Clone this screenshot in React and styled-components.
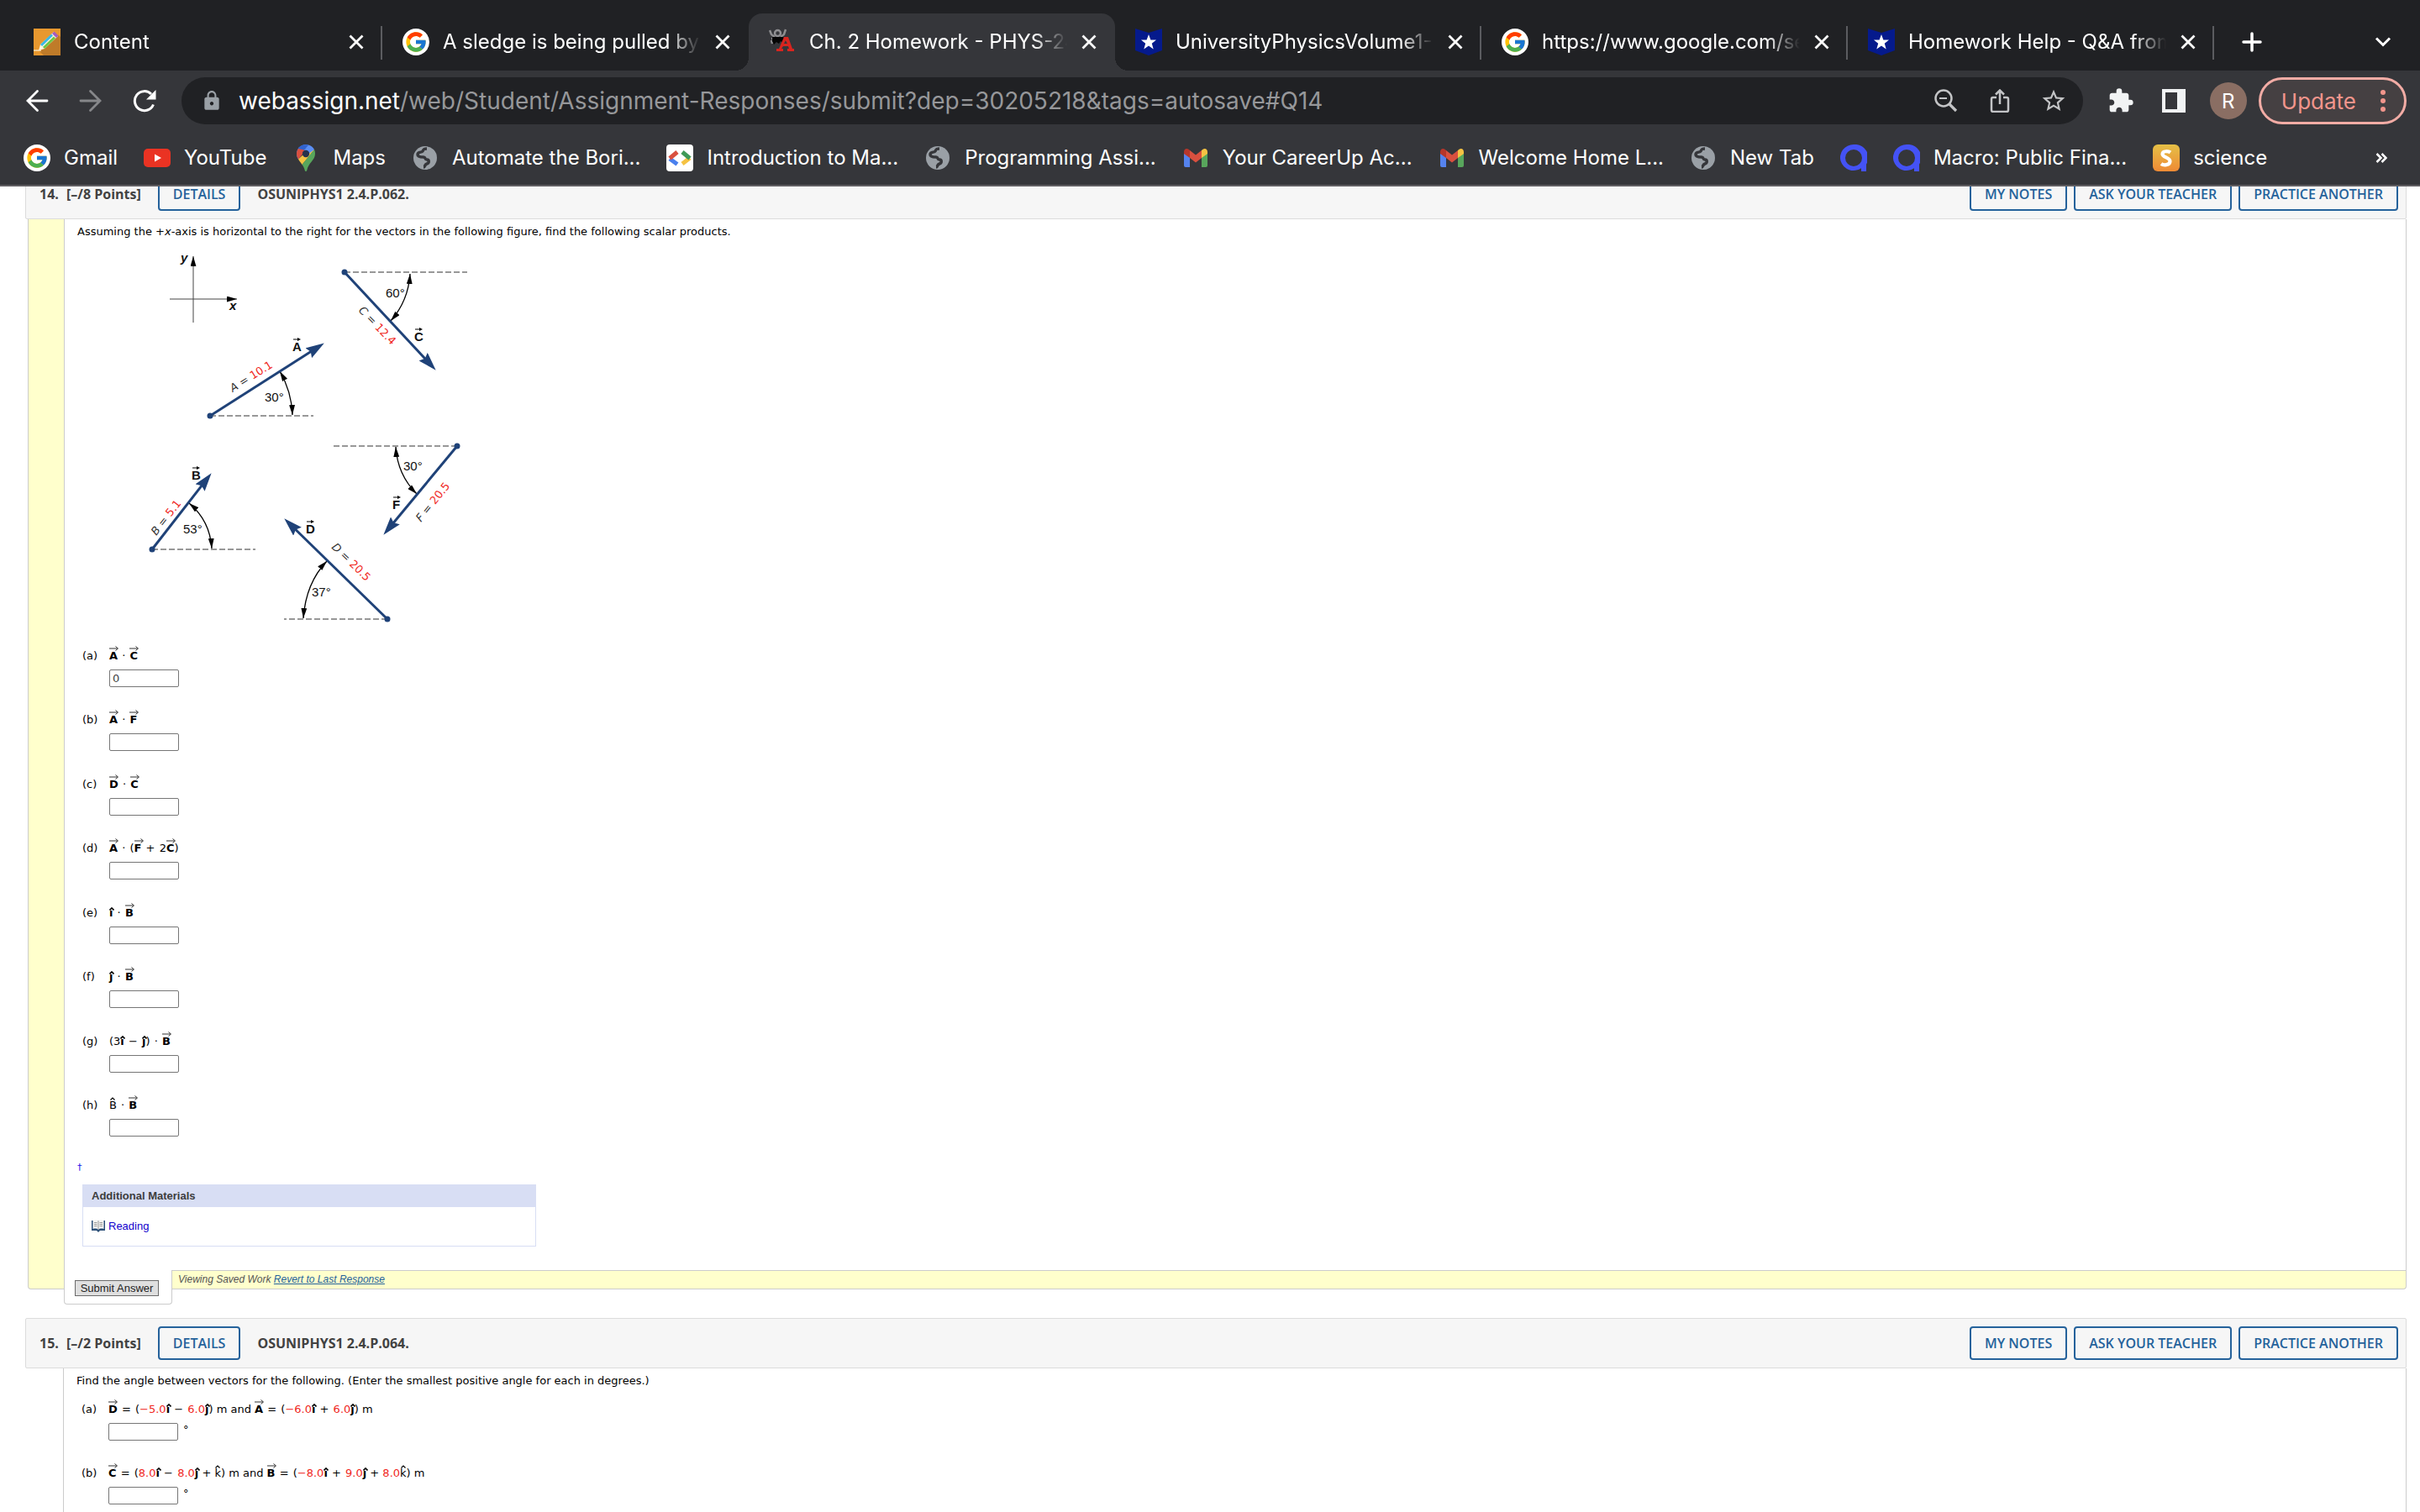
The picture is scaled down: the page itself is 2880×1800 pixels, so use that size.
import React from 'react'
import styled, { createGlobalStyle, css } from 'styled-components'
import { FcGoogle } from 'react-icons/fc'
import { MdExtension, MdStarBorder, MdLock } from 'react-icons/md'

const GlobalStyle = createGlobalStyle`
    * {
        box-sizing: border-box;
    }
    body {
        margin: 0;
        background-color: white;
    }
    button, input {
        font: inherit;
        margin: 0;
    }
    svg {
        display: block;
    }
`

/* ---------- browser ---------- */

const Window = styled.div`
    height: 100vh;
    display: flex;
    flex-direction: column;
    overflow: hidden;
`
const Chrome = styled.header`
    flex: none;
    font-family: Inter, "Liberation Sans", sans-serif;
    color: white;
    background-color: #35363a;
    border-bottom: 2px solid #605e62;
`
const TabStrip = styled.nav`
    height: 84px;
    display: flex;
    align-items: stretch;
    padding: 16px 28px 0 16px;
    background-color: #202124;
`
const Tab = styled.div`
    flex: 0 1 436px;
    min-width: 0;
    display: flex;
    align-items: center;
    gap: 16px;
    padding: 0 21px 0 24px;
    position: relative;
    &:first-child {
        flex-basis: 439px;
    }
    ${(props) => props.$divider && css`
        &::after {
            content: "";
            position: absolute;
            right: 0;
            top: 15px;
            width: 2px;
            height: 40px;
            background-color: #5b5c60;
        }
    `}
    ${(props) => props.$active && css`
        background-color: #35363a;
        border-radius: 16px 16px 0 0;
        &::before, &::after {
            content: "";
            position: absolute;
            bottom: 0;
            width: 16px;
            height: 16px;
        }
        &::before {
            left: -16px;
            background: radial-gradient(circle at 0 0, transparent 16px, #35363a 16px);
        }
        &::after {
            right: -16px;
            background: radial-gradient(circle at 100% 0, transparent 16px, #35363a 16px);
        }
    `}
`
const TabTitle = styled.span`
    flex: 1;
    min-width: 0;
    font-size: 24px;
    line-height: 32px;
    white-space: nowrap;
    overflow: hidden;
    mask-image: linear-gradient(to right, black calc(100% - 40px), transparent);
`
const IconButton = styled.button`
    flex: none;
    display: flex;
    align-items: center;
    justify-content: center;
    width: ${(props) => props.$size}px;
    height: ${(props) => props.$size}px;
    padding: 0;
    border: none;
    color: ${(props) => props.$color || "white"};
    background-color: transparent;
    cursor: pointer;
`
const NewTab = styled.div`
    flex: 1;
    display: flex;
    align-items: center;
    justify-content: space-between;
    padding-left: 29px;
`
const Toolbar = styled.div`
    height: 72px;
    display: flex;
    align-items: center;
    padding: 0 16px 0 28px;
`
const NavButtons = styled.div`
    display: flex;
    gap: 32px;
    margin-right: 28px;
`
const AddressBar = styled.div`
    flex: 1;
    min-width: 0;
    height: 56px;
    display: flex;
    align-items: center;
    gap: 19px;
    padding: 0 19px 0 23px;
    border-radius: 28px;
    background-color: #202124;
`
const Address = styled.div`
    flex: 1;
    min-width: 0;
    font-size: 28px;
    line-height: 36px;
    white-space: nowrap;
    overflow: hidden;
    outline: none;
    color: #96979a;
`
const Host = styled.span`
    color: white;
`
const AddressActions = styled.div`
    display: flex;
    gap: 32px;
    color: #c3c4c6;
`
const Extensions = styled.div`
    display: flex;
    align-items: center;
    gap: 31px;
    margin: 0 14px 0 29px;
`
const Avatar = styled.button`
    width: 44px;
    height: 44px;
    margin-left: -4px;
    padding: 0;
    border: none;
    border-radius: 50%;
    font-size: 24px;
    color: white;
    background-color: #8a6e63;
`
const UpdateButton = styled.button`
    height: 56px;
    display: flex;
    align-items: center;
    gap: 29px;
    padding: 0 22px 0 24px;
    border: 3px solid #f2aca5;
    border-radius: 28px;
    font-size: 26px;
    color: #f2958c;
    background-color: #454042;
`
const Bookmarks = styled.nav`
    height: 64px;
    display: flex;
    align-items: center;
    gap: 31px;
    padding: 0 34px 0 28px;
`
const Bookmark = styled.a`
    display: flex;
    align-items: center;
    gap: 16px;
    font-size: 24px;
    line-height: 32px;
    white-space: nowrap;
    color: white;
    text-decoration: none;
`
const More = styled.div`
    margin-left: auto;
`

/* ---------- assignment ---------- */

const Page = styled.main`
    flex: 1;
    min-height: 0;
    overflow: hidden;
    padding: 0 16px 0 30px;
    background-color: white;
`
const Scrolled = styled.div`
    margin-top: -21px;
`
const Question = styled.section`
    margin-bottom: 34px;
    font-family: Verdana, "DejaVu Sans", sans-serif;
    font-size: 13px;
    line-height: 20px;
    color: black;
`
const QuestionHeader = styled.div`
    height: 60px;
    display: flex;
    align-items: center;
    padding: 0 9px 0 16px;
    border: 1px solid #dcdcdc;
    border-radius: 2px;
    background-color: #f6f6f6;
    font-family: "Open Sans", sans-serif;
    font-size: 16px;
    font-weight: 700;
    color: #424242;
`
const Number = styled.span`
    width: 32px;
`
const Points = styled.span`
    margin-right: 20px;
`
const ProblemName = styled.span`
    margin-left: 20px;
`
const HeaderActions = styled.div`
    display: flex;
    gap: 8px;
    margin-left: auto;
`
const HeaderButton = styled.button`
    height: 40px;
    padding: 0 16px;
    border: 2px solid #25629b;
    border-radius: 4px;
    font-weight: 600;
    color: #25629b;
    background-color: transparent;
    cursor: pointer;
`
const SavedPanel = styled.div`
    margin-left: 3px;
    padding-left: 42px;
    border: 1px solid #ccc;
    border-top: none;
    border-radius: 0 0 4px 4px;
    background-color: #ffffcc;
`
const PlainPanel = styled.div`
    margin-left: 45px;
    border: 1px solid #ccc;
    border-top: none;
`
const QuestionBody = styled.div`
    padding: 5px 15px 28px;
    border-left: ${(props) => props.$compact ? "none" : "1px solid #ccc"};
    background-color: white;
`
const Prompt = styled.p`
    margin: 0;
`
const Figure = styled.svg`
    margin: 10px 0 20px 73px;
`
const Parts = styled.div`
    margin-top: ${(props) => props.$top || 0}px;
    padding-left: 6px;
`
const Part = styled.div`
    height: 76px;
    display: grid;
    grid-template-columns: 32px 1fr;
    grid-template-rows: 20px 21px;
    row-gap: 6px;
    white-space: nowrap;
    &:nth-child(even) {
        height: 77px;
    }
`
const Answer = styled.div`
    grid-column: 2;
    display: flex;
    gap: 6px;
    line-height: 16px;
`
const AnswerInput = styled.input`
    width: 83px;
    height: 21px;
    padding: 0 3px;
    border: 1px solid #767676;
    border-radius: 2px;
    color: #444;
    background-color: white;
`
const Accented = styled.span`
    display: inline-block;
    position: relative;
    font-weight: ${(props) => props.$light ? 400 : 700};
    svg {
        position: absolute;
        top: ${(props) => props.$top}px;
        left: 0;
    }
`
const Op = styled.span`
    margin: 0 1px;
`
const Random = styled.span`
    color: #f0281e;
`
const Note = styled.a`
    display: block;
    height: 16px;
    margin-bottom: 11px;
    font-size: 11px;
    line-height: 14px;
    color: #1a0ee8;
    text-decoration: none;
`
const Materials = styled.div`
    max-width: 540px;
    margin-left: 6px;
    border: 1px solid #d8def4;
    font-family: Arial, "Liberation Sans", sans-serif;
    font-size: 13px;
`
const MaterialsTitle = styled.div`
    height: 26px;
    padding: 3px 10px;
    font-weight: 700;
    color: #3c3c3c;
    background-color: #d8def4;
`
const MaterialsLink = styled.a`
    height: 46px;
    display: flex;
    align-items: center;
    gap: 4px;
    padding: 0 10px;
    color: #1200cc;
    text-decoration: none;
`
const SubmitRow = styled.div`
    display: flex;
    align-items: flex-start;
    font-family: Arial, "Liberation Sans", sans-serif;
    margin-bottom: -19px;
`
const SubmitBox = styled.div`
    width: 129px;
    height: 41px;
    padding: 12px 0 0 12px;
    border: 1px solid #ccc;
    border-top: none;
    border-radius: 0 0 4px 4px;
    background-color: white;
`
const SubmitButton = styled.button`
    display: block;
    height: 19px;
    width: 100px;
    padding: 0;
    border: 1px solid #6b6b6b;
    font-size: 13px;
    line-height: 15px;
    color: #222;
    background-color: #dfdfdf;
`
const SavedNote = styled.div`
    flex: 1;
    height: 21px;
    padding-left: 7px;
    border-top: 1px solid #ccc;
    font-size: 12px;
    font-style: italic;
    color: #555;
    a {
        color: #25629b;
    }
`

/* ---------- icons ---------- */

const Cross = () => (
    <svg width="18" height="18" viewBox="0 0 18 18" fill="none" stroke="currentColor" strokeWidth="2.8">
        <path d="M1.5 1.5 16.5 16.5M16.5 1.5 1.5 16.5" />
    </svg>
)
const GoogleIcon = () => (
    <svg width="32" height="32" viewBox="0 0 32 32">
        <circle cx="16" cy="16" r="16" fill="white" />
        <FcGoogle x="2" y="2" size={28} />
    </svg>
)
const PencilIcon = () => (
    <svg width="32" height="32" viewBox="0 0 32 32">
        <path d="M0 0h32v32H0z" fill="#e8982f" />
        <path d="M30 8l2 2v22H12l-5-5z" fill="#bf7b29" />
        <path d="M0 26h9" stroke="#f7cf94" strokeWidth="2" />
        <path d="M6 26l2-7L24 4l5 5-16 15z" fill="#fdf3dc" />
        <path d="M9 20 22 7.500" stroke="#38b8e8" strokeWidth="3" />
        <path d="M12 23 25 10.500" stroke="#6cc644" strokeWidth="3" />
        <path d="M22 6l2.500-2.500 5 5L27 11z" fill="#a45cc0" />
    </svg>
)
const AssignIcon = () => (
    <svg width="32" height="32" viewBox="0 0 32 32">
        <path d="M1 2l2 5 4 3M20 1l-2 6-4 3M3 12h14M3 14l1 4M18 11l3 3" stroke="#8d8d8f" strokeWidth="2.500" fill="none" />
        <circle cx="10.500" cy="5.500" r="3.500" fill="none" stroke="#8f8f92" strokeWidth="2.500" />
        <path d="M4 10h13l3 4-3 3-3-2-2 3-3-2-3 3-2-4z" fill="#050505" />
        <path d="M18 10h5l5 14h2v3h-8v-3h2l-1-3h-6l-2 3h2v3h-8v-3h3zM20 14l-2 4h4z" fill="#d8251f" fillRule="evenodd" />
    </svg>
)
const StarBadge = () => (
    <svg width="32" height="32" viewBox="0 0 32 32">
        <path d="M0 0l16 5L32 0v26l-16 6-16-6z" fill="#051a8c" />
        <path d="M16 7l2.400 6.400 6.600.2-5.200 4.200 1.900 6.600L16 20.600l-5.700 3.800 1.900-6.600L7 13.600l6.600-.2z" fill="white" />
    </svg>
)
const BackIcon = () => (
    <svg width="28" height="28" viewBox="0 0 28 28" fill="none" stroke="currentColor" strokeWidth="2.800" strokeLinecap="round">
        <path d="M26 14H3M14.500 2.500 3 14l11.500 11.500" />
    </svg>
)
const ForwardIcon = () => (
    <svg width="28" height="28" viewBox="0 0 28 28" fill="none" stroke="currentColor" strokeWidth="2.800" strokeLinecap="round">
        <path d="M2 14h23M13.500 2.500 25 14 13.500 25.500" />
    </svg>
)
const ReloadIcon = () => (
    <svg width="28" height="28" viewBox="0 0 28 28">
        <path d="M24.500 18.500A11.500 11.500 0 1 1 22 6" fill="none" stroke="currentColor" strokeWidth="3" />
        <path d="M27.500 1v11.500H16z" fill="currentColor" />
    </svg>
)
const ZoomOutIcon = () => (
    <svg width="28" height="28" viewBox="0 0 28 28" fill="none" stroke="currentColor" strokeWidth="2.500">
        <circle cx="11" cy="11" r="9.500" />
        <path d="M6 11h9" strokeWidth="2" />
        <path d="M18 18l8 8" strokeWidth="3.200" />
    </svg>
)
const ShareIcon = () => (
    <svg width="28" height="28" viewBox="0 0 28 28" fill="none" stroke="currentColor" strokeWidth="2.500">
        <path d="M10 10H6a2 2 0 0 0-2 2v13a2 2 0 0 0 2 2h16a2 2 0 0 0 2-2V12a2 2 0 0 0-2-2h-4M14 18V2M9 6.500 14 1.500l5 5" />
    </svg>
)
const SidePanelIcon = () => (
    <svg width="28" height="28" viewBox="0 0 28 28">
        <path d="M0 0h28v28H0zM4 4v20h14V4z" fill="currentColor" fillRule="evenodd" />
    </svg>
)
const DotsIcon = () => (
    <svg width="6" height="28" viewBox="0 0 6 28" fill="currentColor">
        <circle cx="3" cy="4" r="3" />
        <circle cx="3" cy="14" r="3" />
        <circle cx="3" cy="24" r="3" />
    </svg>
)
const YouTubeIcon = () => (
    <svg width="32" height="32" viewBox="0 0 32 32">
        <rect y="5" width="32" height="22" rx="5" fill="#ea3323" />
        <path d="M13 11.500v9l8-4.500z" fill="white" />
    </svg>
)
const MapsIcon = () => (
    <svg width="32" height="32" viewBox="0 0 32 32">
        <path d="M16 0C9.500 0 5 5 5 11c0 2.500.7 4.500 2 6.500L19 .5C18 .2 17 0 16 0z" fill="#4a80ee" />
        <path d="M12 .800c-2.200.8-4 2.200-5.200 4.200l5.200 4.500L19 .5C17 0 14 0 12 .8z" fill="#3163cf" />
        <path d="M7 5C5.500 7 5 9 5 11c0 2.500.8 4.700 2 6.500L16 7z" fill="#d9503f" />
        <path d="M7 17.500C8.400 19.800 10 21.500 11.500 24L26 6.500l-6-1z" fill="#f5c243" />
        <path d="M26 6c.8 1.500 1 3.300 1 5 0 8-8 10.500-9.800 20-.4 1.300-2 1.300-2.400 0-.6-3-1.800-5-3.300-7z" fill="#58a65c" />
        <path d="M19 .500c3 .8 5.500 2.700 7 5.500l-6.500 5L14 7z" fill="#5b8ff5" />
        <circle cx="16" cy="11" r="4.200" fill="#27324c" />
    </svg>
)
const GlobeIcon = () => (
    <svg width="32" height="32" viewBox="0 0 32 32">
        <circle cx="16" cy="16" r="14" fill="#9aa0a6" />
        <path d="M18 5c-4 0-4 1-5 3s-6 0-6 4c0 3 4 3 7 3s1 3 4 3 3 4 0 5-2 4-4 4" fill="none" stroke="#35363a" strokeWidth="3.500" />
    </svg>
)
const CodeIcon = () => (
    <svg width="32" height="32" viewBox="0 0 32 32" fill="none" strokeWidth="5">
        <rect width="32" height="32" rx="4" fill="white" />
        <path d="M4 17l9 6.500" stroke="#4a80ee" />
        <path d="M13 9 4 16.500" stroke="#d9503f" />
        <path d="M28 16l-9 7" stroke="#f5c243" />
        <path d="M19 9l9 7.500" stroke="#3f9a57" />
    </svg>
)
const GmailIcon = () => (
    <svg width="32" height="32" viewBox="0 0 32 32">
        <path d="M2 9v16a2 2 0 0 0 2 2h5V14z" fill="#5583ee" />
        <path d="M30 9v16a2 2 0 0 1-2 2h-5V14z" fill="#58a65c" />
        <path d="M23 7l1.500-1.200C27 4 30 5.500 30 9v2l-7 5z" fill="#f5c243" />
        <path d="M9 7 7.500 5.800C5 4 2 5.500 2 9v2l7 5z" fill="#b6362b" />
        <path d="M9 7l7 5.500L23 7v9l-7 5.500L9 16z" fill="#d9503f" />
    </svg>
)
const QIcon = () => (
    <svg width="32" height="32" viewBox="0 0 32 32">
        <path d="M16 0a16 15.500 0 1 0 9 28.300V32h6v-8.500A16 15.500 0 0 0 16 0zm0 6a10 10 0 0 1 0 20 10 10 0 0 1 0-20z" fill="#4452f5" fillRule="evenodd" />
    </svg>
)
const SIcon = () => (
    <svg width="32" height="32" viewBox="0 0 32 32">
        <defs>
            <linearGradient id="science" x2="0" y2="1">
                <stop stopColor="#e5c046" />
                <stop offset="1" stopColor="#ef8a35" />
            </linearGradient>
        </defs>
        <rect width="32" height="32" rx="6" fill="url(#science)" />
        <path d="M21 9.500c-2-1.500-9.500-2.500-9.500 2 0 4 9 4 9 8.500 0 5-8 5-10.500 3" fill="none" stroke="white" strokeWidth="4.200" />
    </svg>
)
const BookIcon = () => (
    <svg width="16" height="16" viewBox="0 0 16 16">
        <path d="M0 1h16v12h-6l-2 2-2-2H0z" fill="#2c5078" />
        <path d="M1.500 1C4 0 6.500 0 8 1.500 9.500 0 12 0 14.500 1v10c-2.500-.7-5-.5-6.500.8-1.500-1.300-4-1.500-6.500-.8z" fill="#f4f4f2" />
        <path d="M8 1.500v10M3 3.500h3.500M3 5.500h3.500M3 7.500h3.500M9.500 3.500H13M9.500 5.500H13M9.500 7.500H13" stroke="#9a9a9a" strokeWidth="1" />
    </svg>
)

/* ---------- math ---------- */

const Vec = ({ children }) => (
    <Accented $top={-2}>
        <svg width="11" height="6" viewBox="0 0 11 6" fill="none" stroke="#333" strokeWidth="1">
            <path d="M0 3h10M7.500.5 10.500 3 7.500 5.500" />
        </svg>
        {children}
    </Accented>
)
const Hat = ({ children }) => (
    <Accented $light $top={0}>
        <svg width="8" height="4" viewBox="0 0 8 4" fill="none" stroke="black" strokeWidth="1.200">
            <path d="M1.500 3.500 4 1l2.500 2.500" />
        </svg>
        {children}
    </Accented>
)
// unit vectors take a dotless letter under the hat
const Unit = ({ children }) => (
    <Accented $top={3}>
        <svg width="6" height="4" viewBox="0 0 6 4" fill="none" stroke="black" strokeWidth="1.600">
            <path d="M.5 3.500 3 1l2.500 2.500" />
        </svg>
        {children}
    </Accented>
)
const I = () => <Unit>ı</Unit>
const J = () => <Unit>ȷ</Unit>
const Dot = () => <Op>·</Op>

const parts = [
    { id: "a", value: "0", text: <><Vec>A</Vec> <Dot /> <Vec>C</Vec></> },
    { id: "b", text: <><Vec>A</Vec> <Dot /> <Vec>F</Vec></> },
    { id: "c", text: <><Vec>D</Vec> <Dot /> <Vec>C</Vec></> },
    { id: "d", text: <><Vec>A</Vec> <Dot /> (<Vec>F</Vec> <Op>+</Op> 2<Vec>C</Vec>)</> },
    { id: "e", text: <><I /> <Dot /> <Vec>B</Vec></> },
    { id: "f", text: <><J /> <Dot /> <Vec>B</Vec></> },
    { id: "g", text: <>(3<I /> <Op>−</Op> <J />) <Dot /> <Vec>B</Vec></> },
    { id: "h", text: <><Hat>B</Hat> <Dot /> <Vec>B</Vec></> },
]

const angleParts = [
    {
        id: "a",
        text: <><Vec>D</Vec> <Op>=</Op> (<Random>−5.0</Random><I /> <Op>−</Op> <Random>6.0</Random><J />) m and <Vec>A</Vec> <Op>=</Op> (<Random>−6.0</Random><I /> <Op>+</Op> <Random>6.0</Random><J />) m</>,
    },
    {
        id: "b",
        text: <><Vec>C</Vec> <Op>=</Op> (<Random>8.0</Random><I /> <Op>−</Op> <Random>8.0</Random><J /> + <Hat>k</Hat>) m and <Vec>B</Vec> <Op>=</Op> (<Random>−8.0</Random><I /> <Op>+</Op> <Random>9.0</Random><J /> + <Random>8.0</Random><Hat>k</Hat>) m</>,
    },
]

/* ---------- vector figure ---------- */

const vectors = [
    { name: "A", size: "10.1", from: [250, 495], to: [385, 409], base: 373, arc: "M333 442Q347 466 348 494", angle: "30", angleAt: [315, 478], nameAt: [348, 418], sizeAt: [277, 467], turn: -32 },
    { name: "B", size: "5.1", from: [181, 654], to: [251, 564], base: 304, arc: "M225 599Q250 620 252 653", angle: "53", angleAt: [218, 635], nameAt: [228, 571], sizeAt: [186, 638], turn: -52 },
    { name: "C", size: "12.4", from: [410, 324], to: [518, 440], base: 556, arc: "M488 326Q486 358 465 382", angle: "60", angleAt: [459, 354], nameAt: [493, 406], sizeAt: [426, 370], turn: 46 },
    { name: "D", size: "20.5", from: [461, 737], to: [339, 618], base: 338, arc: "M389 668Q364 694 361 736", angle: "37", angleAt: [371, 710], nameAt: [364, 635], sizeAt: [394, 652], turn: 44 },
    { name: "F", size: "20.5", from: [544, 531], to: [457, 636], base: 396, arc: "M471 532Q473 565 496 588", angle: "30", angleAt: [480, 560], nameAt: [467, 606], sizeAt: [501, 622], turn: -51 },
]

const VectorFigure = () => (
    <Figure width="405" height="455" viewBox="165 296 405 455" role="img" aria-label="Vectors A, B, C, D and F">
        <defs>
            <marker id="tip" viewBox="0 0 14 8" refX="14" refY="4" markerWidth="12" markerHeight="7" markerUnits="userSpaceOnUse" orient="auto-start-reverse">
                <path d="M0 0 14 4 0 8z" fill="black" />
            </marker>
            <marker id="head" viewBox="0 0 22 14" refX="21" refY="7" markerWidth="22" markerHeight="14" markerUnits="userSpaceOnUse" orient="auto">
                <path d="M0 0 22 7 0 14 3 7z" fill="#1f4278" />
            </marker>
        </defs>
        <path d="M230 384V305" stroke="#444" markerEnd="url(#tip)" />
        <path d="M202 356H282" stroke="#444" markerEnd="url(#tip)" />
        <g fontFamily="Liberation Sans, Arial, sans-serif" fontSize="15" fill="#111">
            <text x="215" y="312" fontWeight="700" fontStyle="italic">y</text>
            <text x="273" y="369" fontWeight="700" fontStyle="italic">x</text>
            {vectors.map((v) => (
                <g key={v.name}>
                    <path d={`M${v.from[0]} ${v.from[1]}H${v.base}`} stroke="#777" strokeWidth="1.300" strokeDasharray="7 3" />
                    <path d={v.arc} fill="none" stroke="black" strokeWidth="1.300" markerStart="url(#tip)" markerEnd="url(#tip)" />
                    <path
                        d={`M${v.from[0]} ${v.from[1]}L${v.to[0]} ${v.to[1]}`}
                        stroke="#1f4278"
                        strokeWidth="3"
                        strokeDasharray={`${Math.hypot(v.to[0] - v.from[0], v.to[1] - v.from[1]) - 14} 20`}
                        markerEnd="url(#head)"
                    />
                    <circle cx={v.from[0]} cy={v.from[1]} r="3.500" fill="#1f4278" />
                    <text x={v.angleAt[0]} y={v.angleAt[1]} fontSize="15">{v.angle}°</text>
                    <text x={v.nameAt[0]} y={v.nameAt[1]} fontWeight="700">{v.name}</text>
                    <path d={`M${v.nameAt[0] + 1} ${v.nameAt[1] - 14}h7`} stroke="black" />
                    <path d={`M${v.nameAt[0] + 6} ${v.nameAt[1] - 16}l4 2-4 2z`} fill="black" />
                    <text
                        transform={`translate(${v.sizeAt[0]} ${v.sizeAt[1]}) rotate(${v.turn})`}
                        fontFamily="DejaVu Sans, Verdana, sans-serif"
                        fontSize="13"
                        fill="#333"
                    >
                        <tspan fontStyle="italic">{v.name}</tspan> = <tspan fill="#f0281e">{v.size}</tspan>
                    </text>
                </g>
            ))}
        </g>
    </Figure>
)

/* ---------- page ---------- */

const tabs = [
    { title: "Content", icon: <PencilIcon />, divider: true },
    { title: "A sledge is being pulled by", icon: <GoogleIcon /> },
    { title: "Ch. 2 Homework - PHYS-24", icon: <AssignIcon />, active: true },
    { title: "UniversityPhysicsVolume1-O", icon: <StarBadge />, divider: true },
    { title: "https://www.google.com/se", icon: <GoogleIcon />, divider: true },
    { title: "Homework Help - Q&A from", icon: <StarBadge />, divider: true },
]

const bookmarks = [
    { title: "Gmail", icon: <GoogleIcon /> },
    { title: "YouTube", icon: <YouTubeIcon /> },
    { title: "Maps", icon: <MapsIcon /> },
    { title: "Automate the Bori...", icon: <GlobeIcon /> },
    { title: "Introduction to Ma...", icon: <CodeIcon /> },
    { title: "Programming Assi...", icon: <GlobeIcon /> },
    { title: "Your CareerUp Ac...", icon: <GmailIcon /> },
    { title: "Welcome Home L...", icon: <GmailIcon /> },
    { title: "New Tab", icon: <GlobeIcon /> },
    { title: "", icon: <QIcon /> },
    { title: "Macro: Public Fina...", icon: <QIcon /> },
    { title: "science", icon: <SIcon /> },
]

const Header = ({ number, points, name }) => (
    <QuestionHeader>
        <Number>{number}.</Number>
        <Points>[–/{points} Points]</Points>
        <HeaderButton>DETAILS</HeaderButton>
        <ProblemName>{name}</ProblemName>
        <HeaderActions>
            <HeaderButton>MY NOTES</HeaderButton>
            <HeaderButton>ASK YOUR TEACHER</HeaderButton>
            <HeaderButton>PRACTICE ANOTHER</HeaderButton>
        </HeaderActions>
    </QuestionHeader>
)

const PartList = ({ prefix, items, unit, top }) => (
    <Parts $top={top}>
        {items.map((item) => (
            <Part key={item.id}>
                <span>({item.id})</span>
                <label htmlFor={prefix + item.id}>{item.text}</label>
                <Answer>
                    <AnswerInput id={prefix + item.id} defaultValue={item.value} />
                    {unit}
                </Answer>
            </Part>
        ))}
    </Parts>
)

const App = () => {
    return (
        <Window>
            <GlobalStyle />
            <Chrome>
                <TabStrip>
                    {tabs.map((tab) => (
                        <Tab key={tab.title} $active={tab.active} $divider={tab.divider}>
                            {tab.icon}
                            <TabTitle>{tab.title}</TabTitle>
                            <IconButton $size={20} aria-label="Close tab"><Cross /></IconButton>
                        </Tab>
                    ))}
                    <NewTab>
                        <IconButton $size={32} aria-label="New tab">
                            <svg width="24" height="24" viewBox="0 0 24 24" stroke="currentColor" strokeWidth="3.500" strokeLinecap="round">
                                <path d="M2 12h20M12 2v20" />
                            </svg>
                        </IconButton>
                        <IconButton $size={32} aria-label="Search tabs">
                            <svg width="20" height="12" viewBox="0 0 20 12" fill="none" stroke="currentColor" strokeWidth="3">
                                <path d="M2 1.500l8 8 8-8" />
                            </svg>
                        </IconButton>
                    </NewTab>
                </TabStrip>
                <Toolbar>
                    <NavButtons>
                        <IconButton $size={32} aria-label="Back"><BackIcon /></IconButton>
                        <IconButton $size={32} $color="#86878a" aria-label="Forward"><ForwardIcon /></IconButton>
                        <IconButton $size={32} aria-label="Reload"><ReloadIcon /></IconButton>
                    </NavButtons>
                    <AddressBar>
                        <MdLock size={26} color="#9aa0a6" />
                        <Address role="textbox" aria-label="Address">
                            <Host>webassign.net</Host>/web/Student/Assignment-Responses/submit?dep=30205218&amp;tags=autosave#Q14
                        </Address>
                        <AddressActions>
                            <IconButton $size={32} $color="#c3c4c6" aria-label="Zoom"><ZoomOutIcon /></IconButton>
                            <IconButton $size={32} $color="#c3c4c6" aria-label="Share"><ShareIcon /></IconButton>
                            <IconButton $size={32} $color="#c3c4c6" aria-label="Bookmark"><MdStarBorder size={36} /></IconButton>
                        </AddressActions>
                    </AddressBar>
                    <Extensions>
                        <IconButton $size={32} $color="#f1f3f4" aria-label="Extensions"><MdExtension size={34} /></IconButton>
                        <IconButton $size={32} $color="#f1f3f4" aria-label="Side panel"><SidePanelIcon /></IconButton>
                        <Avatar>R</Avatar>
                    </Extensions>
                    <UpdateButton>Update<DotsIcon /></UpdateButton>
                </Toolbar>
                <Bookmarks>
                    {bookmarks.map((item, i) => (
                        <Bookmark href="#" key={i} aria-label={item.title || "Q"}>
                            {item.icon}
                            {item.title}
                        </Bookmark>
                    ))}
                    <More>
                        <IconButton $size={24} aria-label="More bookmarks">
                            <svg width="14" height="12" viewBox="0 0 14 12" fill="none" stroke="currentColor" strokeWidth="2.500">
                                <path d="M1.500 1l5 5-5 5M7.500 1l5 5-5 5" />
                            </svg>
                        </IconButton>
                    </More>
                </Bookmarks>
            </Chrome>
            <Page>
                <Scrolled>
                    <Question>
                        <Header number={14} points={8} name="OSUNIPHYS1 2.4.P.062." />
                        <SavedPanel>
                            <QuestionBody>
                                <Prompt>
                                    Assuming the +<i>x</i>-axis is horizontal to the right for the vectors in the following figure, find the following scalar products.
                                </Prompt>
                                <VectorFigure />
                                <PartList prefix="q14" items={parts} />
                                <Note href="#">†</Note>
                                <Materials>
                                    <MaterialsTitle>Additional Materials</MaterialsTitle>
                                    <MaterialsLink href="#"><BookIcon />Reading</MaterialsLink>
                                </Materials>
                            </QuestionBody>
                            <SubmitRow>
                                <SubmitBox>
                                    <SubmitButton>Submit Answer</SubmitButton>
                                </SubmitBox>
                                <SavedNote>
                                    Viewing Saved Work <a href="#">Revert to Last Response</a>
                                </SavedNote>
                            </SubmitRow>
                        </SavedPanel>
                    </Question>
                    <Question>
                        <Header number={15} points={2} name="OSUNIPHYS1 2.4.P.064." />
                        <PlainPanel>
                            <QuestionBody $compact>
                                <Prompt>
                                    Find the angle between vectors for the following. (Enter the smallest positive angle for each in degrees.)
                                </Prompt>
                                <PartList prefix="q15" items={angleParts} unit="°" top={14} />
                            </QuestionBody>
                        </PlainPanel>
                    </Question>
                </Scrolled>
            </Page>
        </Window>
    )
}

export default App
